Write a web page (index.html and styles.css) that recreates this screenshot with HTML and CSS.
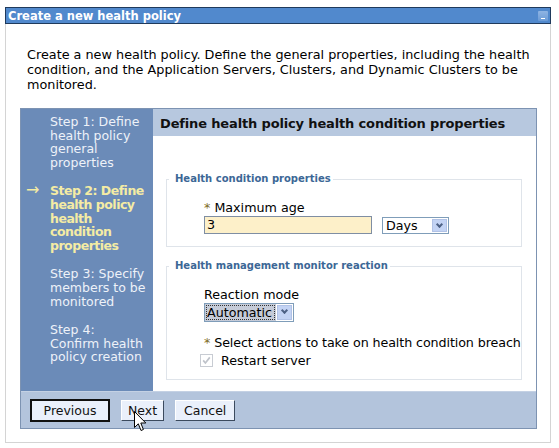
FILE: index.html
```html
<!DOCTYPE html>
<html lang="en">
<head>
  <meta charset="UTF-8" />
  <title>Create a new health policy</title>
  <link rel="stylesheet" href="styles.css">
</head>
<body>
  <div class="portlet">
    <div class="titlebar">
      <span class="title">Create a new health policy</span>
      <span class="minimize"></span>
    </div>
    <div class="portlet-body">
      <p class="intro">Create a new health policy. Define the general properties, including the health condition, and the Application Servers, Clusters, and Dynamic Clusters to be monitored.</p>

      <div class="wizard">
        <div class="wizard-main">
          <ul class="steps">
            <li>Step 1: Define health policy general properties</li>
            <li class="current"><span class="arrow">&rarr;</span>Step 2: Define health policy health condition properties</li>
            <li>Step 3: Specify members to be monitored</li>
            <li>Step 4: Confirm health policy creation</li>
          </ul>

          <div class="step-content">
            <h2 class="step-title">Define health policy health condition properties</h2>

            <fieldset class="group first">
              <legend>Health condition properties</legend>
              <div class="field">
                <label><span class="req">*</span> Maximum age</label>
                <div class="field-row">
                  <span class="text-input">3</span>
                  <span class="select days"><span class="select-value">Days</span><span class="select-btn"></span></span>
                </div>
              </div>
            </fieldset>

            <fieldset class="group">
              <legend>Health management monitor reaction</legend>
              <div class="field">
                <label>Reaction mode</label>
                <div class="field-row">
                  <span class="select mode"><span class="select-value focused">Automatic</span><span class="select-btn"></span></span>
                </div>
              </div>
              <div class="field actions">
                <label><span class="req">*</span> Select actions to take on health condition breach</label>
                <div class="check-row">
                  <span class="checkbox">
                    <svg width="9" height="9" viewBox="0 0 9 9"><path d="M1.2 4.4 L3.4 7 L7.8 1.4" fill="none" stroke="#bfc3ca" stroke-width="1.7"/></svg>
                  </span>
                  <span>Restart server</span>
                </div>
              </div>
            </fieldset>
          </div>
        </div>

        <div class="wizard-buttons">
          <button class="btn default">Previous</button>
          <span class="btn-wrap">
            <button class="btn">Next</button>
            <svg class="cursor" width="13" height="21" viewBox="0 0 13 21">
              <path d="M0.5 0.5 L0.5 16.5 L4.3 12.8 L7 19.5 L9.4 18.5 L6.8 12 L11.8 12 Z" fill="#fff" stroke="#000" stroke-width="1"/>
            </svg>
          </span>
          <button class="btn">Cancel</button>
        </div>
      </div>
    </div>
  </div>
</body>
</html>
```

FILE: styles.css
```css
body { margin: 0; background: #fff; font-family: "DejaVu Sans", Verdana, sans-serif; font-size: 12.5px; color: #000; }

.portlet { margin: 7px 8px 0 5px; }
.titlebar {
  height: 15px;
  background: #5189cd;
  border: 1px solid #1f3a5c;
  display: flex;
  align-items: center;
  justify-content: space-between;
  padding: 0 2px;
}
.title { color: #fff; font-weight: bold; font-size: 11.5px; }
.minimize {
  width: 10px; height: 10px;
  background: linear-gradient(#8fb4e3, #6b9bd6);
  border-radius: 1px;
  position: relative;
}
.minimize::after { content: ""; position: absolute; left: 3px; right: 3px; bottom: 2px; height: 1px; background: #fff; }

.portlet-body {
  border: 1px solid #d4d4d4;
  border-top: none;
  padding: 0 13px 0 14px;
  height: 419px;
  box-sizing: border-box;
}
.intro { margin: 0; padding: 23px 0 0 7px; line-height: 15px; width: 510px; font-size: 12.8px; }

.wizard { margin-top: 16px; border: 1px solid #7d93b2; }
.wizard-main { display: flex; height: 282px; }

.steps {
  list-style: none;
  margin: 0;
  padding: 6px 3px 0 29px;
  width: 100px;
  background: #6b8bb8;
  color: #eef2f8;
  line-height: 13.7px;
  flex-shrink: 0;
}
.steps li { margin-bottom: 14.5px; position: relative; padding-right: 4px; }
.steps li.current { color: #f4eca4; font-weight: bold; letter-spacing: -0.5px; }
.arrow { position: absolute; left: -24px; top: -1px; font-size: 16px; font-weight: normal; letter-spacing: 0; }

.step-content { flex: 1; min-width: 0; }
.step-title {
  margin: 0;
  height: 27px;
  line-height: 29px;
  padding-left: 7px;
  background: #b7c8df;
  font-size: 13px;
  letter-spacing: -0.15px;
  color: #111;
}

.group {
  margin: 37px 14px 0 13px;
  padding: 0 0 0 37px;
  border: 1px solid #dfe4ea;
  box-sizing: border-box;
  height: 74px;
}
.group + .group { margin-top: 13px; height: 120px; }
.group legend {
  margin-left: -35px;
  padding: 0 2px 0 6px;
  color: #3c6796;
  font-weight: bold;
  font-size: 10px;
  line-height: 12px;
}

.field { padding-top: 15px; line-height: 15px; font-size: 12.7px; }
.field label { display: block; white-space: nowrap; }
.req { color: #7d6b1e; }
.field-row { display: flex; gap: 10px; margin-top: 1px; }

.text-input {
  width: 164px;
  height: 16px;
  background: #fdf0c9;
  border: 1px solid #7f8ea3;
  padding-left: 2px;
  line-height: 16px;
}
.select {
  display: flex;
  height: 15px;
  border: 1px solid #7f9db9;
  background: #fff;
  margin-top: 1px;
}
.select-value { padding: 0 4px 0 3px; line-height: 15px; }
.days .select-value { width: 41px; }
.mode { margin-top: 0; height: 17px; }
.mode .select-value { line-height: 16px; width: 67px; }
.select-value.focused {
  background: #c5cbd8;
  outline: 1px dotted #333;
  outline-offset: -2px;
  padding: 1px 2px 0 2px;
}
.select-btn {
  width: 15px;
  margin: 1px;
  background: #c3d3f4;
  border: 1px solid #b1c2e6;
  box-sizing: border-box;
  position: relative;
}
.select-btn::after {
  content: "";
  position: absolute;
  left: 4px; top: 2px;
  width: 3px; height: 3px;
  border-right: 2px solid #4d6185;
  border-bottom: 2px solid #4d6185;
  transform: rotate(45deg);
}

.field.actions { padding-top: 13px; }
.field.actions label { letter-spacing: -0.1px; }
.check-row { display: flex; align-items: center; gap: 8px; margin-left: -4px; margin-top: 3px; }
.checkbox {
  width: 11px; height: 11px;
  border: 1px solid #c8ccd3;
  background: #fff;
  display: flex; align-items: center; justify-content: center;
}

.wizard-buttons {
  display: flex;
  gap: 11px;
  height: 36px;
  align-items: center;
  padding-left: 9px;
  background: #b3c4dc;
  border-top: 1px solid #c4d1e4;
}
.btn {
  font-family: "DejaVu Sans", Verdana, sans-serif;
  font-size: 12.5px;
  height: 21px;
  padding: 0 8px;
  background: #eaf0fb;
  border: 1px solid #fff;
  border-right-color: #3b4a5e;
  border-bottom-color: #3b4a5e;
  color: #111;
}
.btn.default { border: 2px solid #111; width: 80px; height: 23px; }
.btn-wrap { position: relative; display: flex; }
.btn-wrap .btn { width: 43px; padding: 0; }
.cursor { position: absolute; left: 13px; top: 11px; }
```
